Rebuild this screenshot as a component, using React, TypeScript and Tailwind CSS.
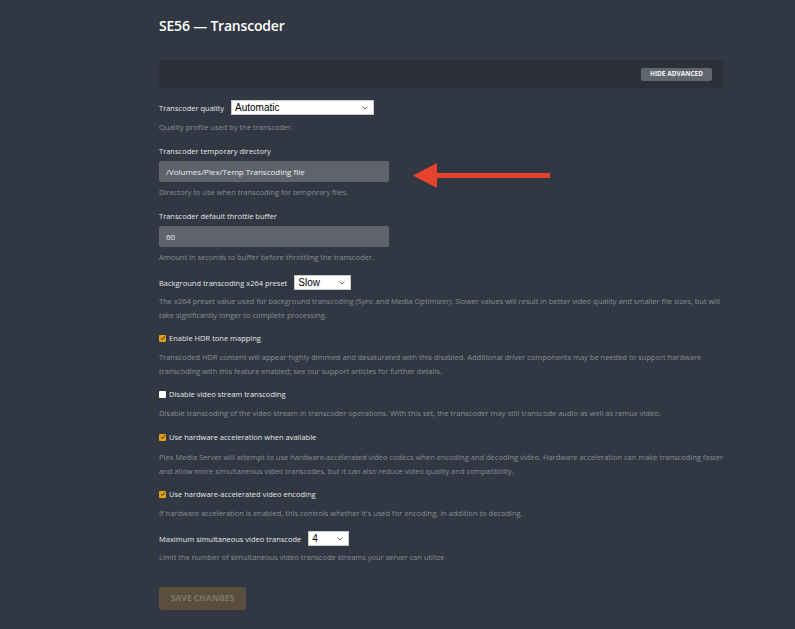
import React from "react";

const font = { fontFamily: '"Open Sans", "Noto Sans", sans-serif' };

function Select({ value, width }: { value: string; width: string }) {
  return (
    <div
      className={`flex h-[15px] ${width} items-center justify-between border border-[#c9c9c9] bg-white pl-[3px] pr-[5px] text-[10px] leading-none text-black`}
      style={{ fontFamily: '"Liberation Sans", Arial, sans-serif' }}
    >
      <span>{value}</span>
      <svg width="6" height="4" viewBox="0 0 6 4" fill="none">
        <path d="M0.5 0.5 L3 3 L5.5 0.5" stroke="#555" strokeWidth="0.9" />
      </svg>
    </div>
  );
}

function Checkbox({ checked, label }: { checked: boolean; label: string }) {
  return (
    <div className="flex h-[14px] items-center gap-[3px] text-[7.5px] leading-[14px] text-[#e4e5e7]">
      {checked ? (
        <span className="flex h-[7px] w-[7px] items-center justify-center rounded-[1px] bg-[#e5a00d]">
          <svg width="6" height="6" viewBox="0 0 6 6" fill="none">
            <path d="M1 3.2 L2.4 4.6 L5 1.2" stroke="#3b2f12" strokeWidth="1" />
          </svg>
        </span>
      ) : (
        <span className="h-[7px] w-[7px] rounded-[1px] bg-white" />
      )}
      <span>{label}</span>
    </div>
  );
}

function Help({ children, className = "" }: { children: React.ReactNode; className?: string }) {
  return <p className={`text-[7.5px] leading-[14px] text-[#878c94] ${className}`}>{children}</p>;
}

function Label({ children, className = "" }: { children: React.ReactNode; className?: string }) {
  return <div className={`text-[7.5px] leading-[14px] text-[#e4e5e7] ${className}`}>{children}</div>;
}

function TextInput({ value }: { value: string }) {
  return (
    <div className="mt-[3px] flex h-[21px] w-[230px] items-center rounded-[2px] bg-[#5f646c] px-[7px] text-[8px] text-[#eceef0]">
      {value}
    </div>
  );
}

export default function App() {
  return (
    <div className="relative min-h-screen bg-[#323843] pl-[159px]" style={font}>
      <div className="w-[566px] pb-[19px] pt-[16px]">
        <h1 className="text-[14px] font-semibold leading-[20px] tracking-[-0.2px] text-white">SE56 — Transcoder</h1>

        <div className="mt-[24px] flex h-[28px] w-[564px] items-center justify-end bg-[#2b3039] pr-[11px]">
          <button className="h-[13px] w-[71px] rounded-[2px] bg-[#60656e] text-[6.5px] font-bold leading-none text-[#f2f2f2]">
            HIDE ADVANCED
          </button>
        </div>

        <div className="mt-[12px] flex h-[15px] items-center gap-[7px]">
          <Label>Transcoder quality</Label>
          <Select value="Automatic" width="w-[143px]" />
        </div>
        <Help className="mt-[5px]">Quality profile used by the transcoder.</Help>

        <Label className="mt-[10px]">Transcoder temporary directory</Label>
        <TextInput value="/Volumes/Plex/Temp Transcoding file" />
        <Help className="mt-[3px]">Directory to use when transcoding for temporary files.</Help>

        <Label className="mt-[10px]">Transcoder default throttle buffer</Label>
        <TextInput value="60" />
        <Help className="mt-[3px]">Amount in seconds to buffer before throttling the transcoder.</Help>

        <div className="mt-[11px] flex h-[15px] items-center gap-[7px]">
          <Label>Background transcoding x264 preset</Label>
          <Select value="Slow" width="w-[57px]" />
        </div>
        <Help className="mt-[4px]">
          The x264 preset value used for background transcoding (Sync and Media Optimizer). Slower values will result in
          better video quality and smaller file sizes, but will take significantly longer to complete processing.
        </Help>

        <div className="mt-[9px]">
          <Checkbox checked label="Enable HDR tone mapping" />
        </div>
        <Help className="mt-[5px]">
          Transcoded HDR content will appear highly dimmed and desaturated with this disabled. Additional driver
          components may be needed to support hardware transcoding with this feature enabled; see our support articles
          for further details.
        </Help>

        <div className="mt-[9px]">
          <Checkbox checked={false} label="Disable video stream transcoding" />
        </div>
        <Help className="mt-[5px]">
          Disable transcoding of the video stream in transcoder operations. With this set, the transcoder may still
          transcode audio as well as remux video.
        </Help>

        <div className="mt-[10px]">
          <Checkbox checked label="Use hardware acceleration when available" />
        </div>
        <Help className="mt-[6px] leading-[13px]">
          Plex Media Server will attempt to use hardware-accelerated video codecs when encoding and decoding video.
          Hardware acceleration can make transcoding faster and allow more simultaneous video transcodes, but it can
          also reduce video quality and compatibility.
        </Help>

        <div className="mt-[9px]">
          <Checkbox checked label="Use hardware-accelerated video encoding" />
        </div>
        <Help className="mt-[5px]">
          If hardware acceleration is enabled, this controls whether it's used for encoding, in addition to decoding.
        </Help>

        <div className="mt-[11px] flex h-[15px] items-center gap-[7px]">
          <Label>Maximum simultaneous video transcode</Label>
          <Select value="4" width="w-[41px]" />
        </div>
        <Help className="mt-[4px]">
          Limit the number of simultaneous video transcode streams your server can utilize
        </Help>

        <button className="mt-[23px] h-[23px] w-[87px] rounded-[2px] bg-[#5a4e3d] text-[8.5px] font-bold leading-none text-[#7f786a]">
          SAVE CHANGES
        </button>
      </div>

      <svg className="absolute left-[413px] top-[163px]" width="138" height="25" viewBox="0 0 138 25">
        <rect x="22" y="10" width="115" height="5" fill="#e6432e" />
        <path d="M0 12.5 L24 0 L24 25 Z" fill="#e6432e" />
      </svg>
    </div>
  );
}
